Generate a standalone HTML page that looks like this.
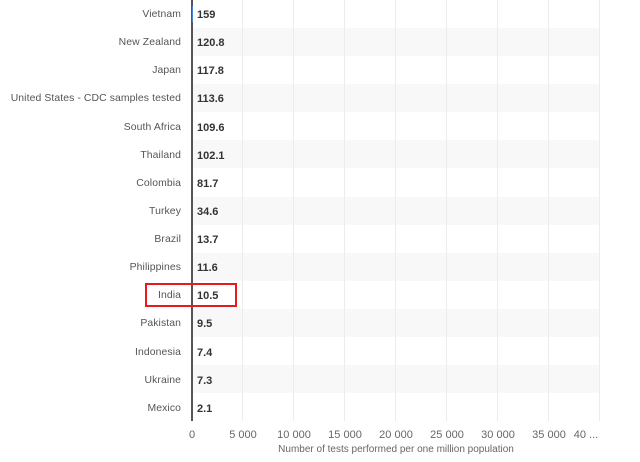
<!DOCTYPE html><html><head><style>
body{margin:0;width:640px;height:462px;background:#fff;font-family:"Liberation Sans",sans-serif;position:relative;overflow:hidden}
.r{position:absolute;left:192px;width:408px;height:28px}
.l{position:absolute;right:459px;font-size:10.4px;color:#555;line-height:14px;letter-spacing:0.1px}
.v{position:absolute;left:197px;font-size:11px;font-weight:bold;color:#333;line-height:14px}
.g{position:absolute;top:0;height:421px;width:1px;background:#ececec}
.t{position:absolute;top:429px;font-size:11px;color:#666;transform:translateX(-50%);white-space:nowrap}
</style></head><body>
<div class="r" style="top:28px;background:#f8f8f8"></div>
<div class="r" style="top:84px;background:#f8f8f8"></div>
<div class="r" style="top:140px;background:#f8f8f8"></div>
<div class="r" style="top:197px;background:#f8f8f8"></div>
<div class="r" style="top:253px;background:#f8f8f8"></div>
<div class="r" style="top:309px;background:#f8f8f8"></div>
<div class="r" style="top:365px;background:#f8f8f8"></div>
<div class="g" style="left:242px"></div><div class="g" style="left:293px"></div><div class="g" style="left:344px"></div><div class="g" style="left:395px"></div><div class="g" style="left:446px"></div><div class="g" style="left:497px"></div><div class="g" style="left:548px"></div><div class="g" style="left:599px"></div>
<div style="position:absolute;left:191px;top:0;width:2px;height:421px;background:#555"></div>
<div style="position:absolute;left:192px;top:6px;width:1px;height:16px;background:#4a7ed8"></div>
<div class="l" style="top:8px">Vietnam</div><div class="v" style="top:8px">159</div>
<div class="l" style="top:36px">New Zealand</div><div class="v" style="top:36px">120.8</div>
<div class="l" style="top:64px">Japan</div><div class="v" style="top:64px">117.8</div>
<div class="l" style="top:92px">United States - CDC samples tested</div><div class="v" style="top:92px">113.6</div>
<div class="l" style="top:121px">South Africa</div><div class="v" style="top:121px">109.6</div>
<div class="l" style="top:149px">Thailand</div><div class="v" style="top:149px">102.1</div>
<div class="l" style="top:177px">Colombia</div><div class="v" style="top:177px">81.7</div>
<div class="l" style="top:205px">Turkey</div><div class="v" style="top:205px">34.6</div>
<div class="l" style="top:233px">Brazil</div><div class="v" style="top:233px">13.7</div>
<div class="l" style="top:261px">Philippines</div><div class="v" style="top:261px">11.6</div>
<div class="l" style="top:289px">India</div><div class="v" style="top:289px">10.5</div>
<div class="l" style="top:317px">Pakistan</div><div class="v" style="top:317px">9.5</div>
<div class="l" style="top:346px">Indonesia</div><div class="v" style="top:346px">7.4</div>
<div class="l" style="top:374px">Ukraine</div><div class="v" style="top:374px">7.3</div>
<div class="l" style="top:402px">Mexico</div><div class="v" style="top:402px">2.1</div>
<div style="position:absolute;left:145px;top:283px;width:88px;height:20px;border:2px solid #e41c1c"></div>
<div class="t" style="left:192px">0</div><div class="t" style="left:243px">5 000</div><div class="t" style="left:294px">10 000</div><div class="t" style="left:345px">15 000</div><div class="t" style="left:396px">20 000</div><div class="t" style="left:447px">25 000</div><div class="t" style="left:498px">30 000</div><div class="t" style="left:549px">35 000</div><div class="t" style="left:586px">40 ...</div>
<div style="position:absolute;left:396px;top:444px;transform:translateX(-50%);font-size:10px;color:#666;white-space:nowrap">Number of tests performed per one million population</div>
</body></html>
